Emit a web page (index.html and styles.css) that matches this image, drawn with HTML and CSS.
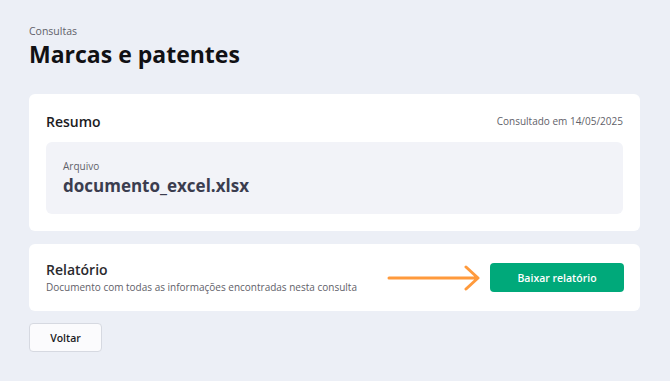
FILE: index.html
```html
<!DOCTYPE html>
<html lang="pt-BR">
<head>
    <meta charset="UTF-8">
    <meta name="viewport" content="width=device-width, initial-scale=1.0">
    <title>Marcas e patentes</title>
    <link rel="stylesheet" href="styles.css">
</head>
<body>
    <div class="page">
        <header class="page-header">
            <p class="breadcrumb">Consultas</p>
            <h1>Marcas e patentes</h1>
        </header>

        <section class="card summary">
            <div class="summary-head">
                <h2>Resumo</h2>
                <span class="consulted">Consultado em 14/05/2025</span>
            </div>
            <div class="file-box">
                <p class="file-label">Arquivo</p>
                <p class="file-name">documento_excel.xlsx</p>
            </div>
        </section>

        <section class="card report">
            <div class="report-text">
                <h2>Relatório</h2>
                <p>Documento com todas as informações encontradas nesta consulta</p>
            </div>
            <div class="report-actions">
                <svg class="arrow" width="94" height="26" viewBox="0 0 94 26">
                    <path d="M2 13 H90 M79 2 L91 13 L79 24" fill="none" stroke="#ff9a3c" stroke-width="3" stroke-linecap="round" stroke-linejoin="round"/>
                </svg>
                <button class="btn-primary">Baixar relatório</button>
            </div>
        </section>

        <button class="btn-back">Voltar</button>
    </div>
</body>
</html>
```

FILE: styles.css
```css
body {
    margin: 0;
    background: #eceff6;
    font-family: 'Open Sans', 'Noto Sans', sans-serif;
    color: #1c1c1f;
}
.page {
    padding: 24px 30px 20px 29px;
    display: flex;
    flex-direction: column;
    align-items: flex-start;
}
.page-header {
    margin-bottom: 26px;
}
.breadcrumb {
    margin: 0 0 2px;
    font-size: 10.5px;
    line-height: 14px;
    color: #5f6169;
}
h1 {
    margin: 0;
    font-size: 23px;
    line-height: 28px;
    font-weight: 700;
    color: #111114;
}
.card {
    box-sizing: border-box;
    width: 611px;
    background: #fff;
    border-radius: 6px;
}
.summary {
    padding: 16px 17px 17px;
}
.summary-head {
    display: flex;
    justify-content: space-between;
    align-items: center;
    height: 22px;
    margin-bottom: 10px;
}
h2 {
    margin: 0;
    font-size: 14px;
    font-weight: 600;
    color: #1c1c1f;
}
.consulted {
    font-size: 10px;
    color: #5f6169;
}
.file-box {
    background: #f2f3f8;
    border-radius: 6px;
    padding: 17px 17px 16px;
}
.file-label {
    margin: 0;
    font-size: 10px;
    line-height: 15px;
    color: #5f6169;
}
.file-name {
    margin: 0;
    font-size: 17px;
    line-height: 24px;
    font-weight: 700;
    color: #3b3d4f;
}
.report {
    margin-top: 13px;
    padding: 16px 16px 16px 17px;
    display: flex;
    justify-content: space-between;
    align-items: center;
}
.report-text h2 {
    font-size: 14px;
    line-height: 19px;
    font-weight: 600;
    color: #2a2a2e;
}
.report-text p {
    margin: 0;
    font-size: 10px;
    line-height: 16px;
    color: #5f6169;
}
.report-actions {
    display: flex;
    align-items: center;
    gap: 9px;
}
.arrow {
    display: block;
}
.btn-primary {
    width: 134px;
    height: 29px;
    border: none;
    border-radius: 4px;
    background: #00a97a;
    color: #fff;
    font-family: inherit;
    font-size: 10.5px;
    font-weight: 600;
    cursor: pointer;
}
.btn-back {
    margin-top: 12px;
    width: 73px;
    height: 29px;
    border: 1px solid #d6d9e1;
    border-radius: 4px;
    background: #fbfbfd;
    color: #1c1c1f;
    font-family: inherit;
    font-size: 10.5px;
    font-weight: 600;
    cursor: pointer;
}
```
